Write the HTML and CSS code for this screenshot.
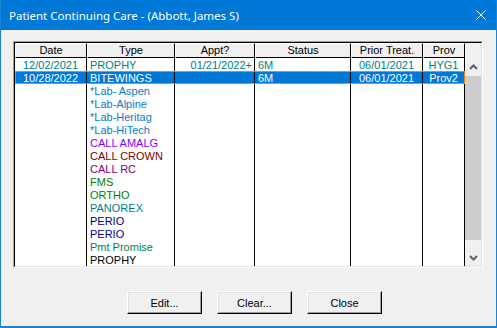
FILE: index.html
```
<!DOCTYPE html>
<html>
<head>
<meta charset="utf-8">
<link rel="stylesheet" href="styles.css">
</head>
<body>
<div class="window">
  <div class="titlebar">
    <span class="title">Patient Continuing Care - (Abbott, James S)</span>
    <svg class="close" width="10" height="10" viewBox="0 0 10 10"><path d="M0.5 0.5 L9.5 9.5 M9.5 0.5 L0.5 9.5" stroke="#fff" stroke-width="1" fill="none"/></svg>
  </div>
  <div class="client">
    <div class="listbox">
      <div class="listbox-in">
        <div class="hdr">
          <div>Date</div><div>Type</div><div>Appt?</div><div>Status</div><div>Prior Treat.</div><div>Prov</div>
        </div>
        <div class="hdr-fill"></div>
        <div class="rows">
          <div class="row teal"><span class="c-date">12/02/2021</span><span>PROPHY</span><span class="c-appt">01/21/2022+</span><span>6M</span><span class="c-mid">06/01/2021</span><span class="c-mid">HYG1</span></div>
          <div class="row sel"><span class="c-date">10/28/2022</span><span>BITEWINGS</span><span class="c-appt"></span><span>6M</span><span class="c-mid">06/01/2021</span><span class="c-mid">Prov2</span></div>
          <div class="row lab"><span></span><span>*Lab- Aspen</span><span></span><span></span><span></span><span></span></div>
          <div class="row lab"><span></span><span>*Lab-Alpine</span><span></span><span></span><span></span><span></span></div>
          <div class="row lab"><span></span><span>*Lab-Heritag</span><span></span><span></span><span></span><span></span></div>
          <div class="row lab"><span></span><span>*Lab-HiTech</span><span></span><span></span><span></span><span></span></div>
          <div class="row violet"><span></span><span>CALL AMALG</span><span></span><span></span><span></span><span></span></div>
          <div class="row maroon"><span></span><span>CALL CROWN</span><span></span><span></span><span></span><span></span></div>
          <div class="row purple"><span></span><span>CALL RC</span><span></span><span></span><span></span><span></span></div>
          <div class="row green"><span></span><span>FMS</span><span></span><span></span><span></span><span></span></div>
          <div class="row green"><span></span><span>ORTHO</span><span></span><span></span><span></span><span></span></div>
          <div class="row teal2"><span></span><span>PANOREX</span><span></span><span></span><span></span><span></span></div>
          <div class="row navy"><span></span><span>PERIO</span><span></span><span></span><span></span><span></span></div>
          <div class="row navy"><span></span><span>PERIO</span><span></span><span></span><span></span><span></span></div>
          <div class="row pmt"><span></span><span>Pmt Promise</span><span></span><span></span><span></span><span></span></div>
          <div class="row black"><span></span><span>PROPHY</span><span></span><span></span><span></span><span></span></div>
        </div>
        <div class="scroll">
          <div class="sb-btn up"><svg width="9" height="6" viewBox="0 0 9 6"><path d="M1 5 L4.5 1.5 L8 5" stroke="#606060" stroke-width="2" fill="none"/></svg></div>
          <div class="sb-thumb"></div>
          <div class="sb-track"></div>
          <div class="sb-btn down"><svg width="9" height="6" viewBox="0 0 9 6"><path d="M1 1 L4.5 4.5 L8 1" stroke="#606060" stroke-width="2" fill="none"/></svg></div>
        </div>
      </div>
    </div>
    <div class="buttons">
      <button class="btn">Edit...</button>
      <button class="btn">Clear...</button>
      <button class="btn">Close</button>
    </div>
  </div>
</div>
</body>
</html>
```
FILE: styles.css
```
* { box-sizing: border-box; }
html, body { margin: 0; padding: 0; }
body { width: 497px; height: 328px; overflow: hidden; background: #f0f0f0; }

.window {
  width: 497px;
  height: 328px;
  border-left: 1px solid #1883d7;
  border-right: 1px solid #1883d7;
  border-bottom: 2px solid #1883d7;
  background: #f0f0f0;
  display: flex;
  flex-direction: column;
}

.titlebar {
  height: 30px;
  flex: none;
  background: #0078d7;
  display: flex;
  align-items: center;
  padding-left: 8px;
  color: #fff;
  font: 11.5px "Noto Sans", sans-serif;
}
.close { margin-left: auto; margin-right: 10px; }

.client { flex: 1; padding: 11px 0 0 12px; }

.listbox {
  width: 470px;
  height: 227px;
  border: 1px solid;
  border-color: #a0a0a0 #fff #fff #a0a0a0;
}
.listbox-in {
  width: 468px;
  height: 225px;
  border: 1px solid;
  border-color: #000 #e3e3e3 #e3e3e3 #000;
  background: #fff;
  display: grid;
  grid-template-columns: 450px 16px;
  grid-template-rows: 15px 208px;
}

.hdr, .row {
  display: grid;
  grid-template-columns: 72px 88px 80px 96px 72px 42px;
}
.hdr div {
  background: #f0f0f0;
  border-top: 1px solid #fff;
  border-left: 1px solid #fff;
  border-right: 1px solid #000;
  border-bottom: 1px solid #000;
  text-align: center;
  font: 11px/13px "Liberation Sans", Arial, sans-serif;
  color: #000;
  white-space: nowrap;
  overflow: hidden;
}
.hdr-fill { background: #f0f0f0; }

.rows { display: flex; flex-direction: column; }
.row {
  height: 13px;
  font: 11px/14px "Liberation Sans", Arial, sans-serif;
}
.row span {
  border-right: 1px solid #000;
  padding: 0 3px;
  white-space: nowrap;
  overflow: hidden;
}
.row .c-date, .row .c-mid { text-align: center; padding: 0; }
.row .c-appt { text-align: right; padding: 0 2px 0 0; }

.teal { color: #008080; }
.lab { color: #0a7ac8; }
.violet { color: #8000ff; }
.maroon { color: #800000; }
.purple { color: #800080; }
.green { color: #008000; }
.teal2 { color: #008080; }
.navy { color: #000080; }
.pmt { color: #00803f; }
.black { color: #000; }

.row.sel {
  background: #0078d7;
  color: #fff;
  outline: 1px solid #ff8000;
  outline-offset: -1px;
}

.scroll {
  background: #f0f0f0;
  display: flex;
  flex-direction: column;
}
.sb-btn { height: 17px; display: flex; align-items: center; justify-content: center; flex: none; }
.sb-btn.up { height: 18px; }
.sb-thumb { height: 164px; background: #cdcdcd; flex: none; }
.sb-track { flex: 1; }

.buttons {
  display: flex;
  gap: 15px;
  padding-left: 114px;
  margin-top: 23px;
}
.btn {
  width: 75px;
  height: 23px;
  padding: 0;
  font: 11px "Liberation Sans", Arial, sans-serif;
  color: #000;
  background: #f0f0f0;
  border: 1px solid;
  border-color: #fff #000 #000 #fff;
  box-shadow: inset -1px -1px #a0a0a0, inset 1px 1px #e3e3e3;
}
```
